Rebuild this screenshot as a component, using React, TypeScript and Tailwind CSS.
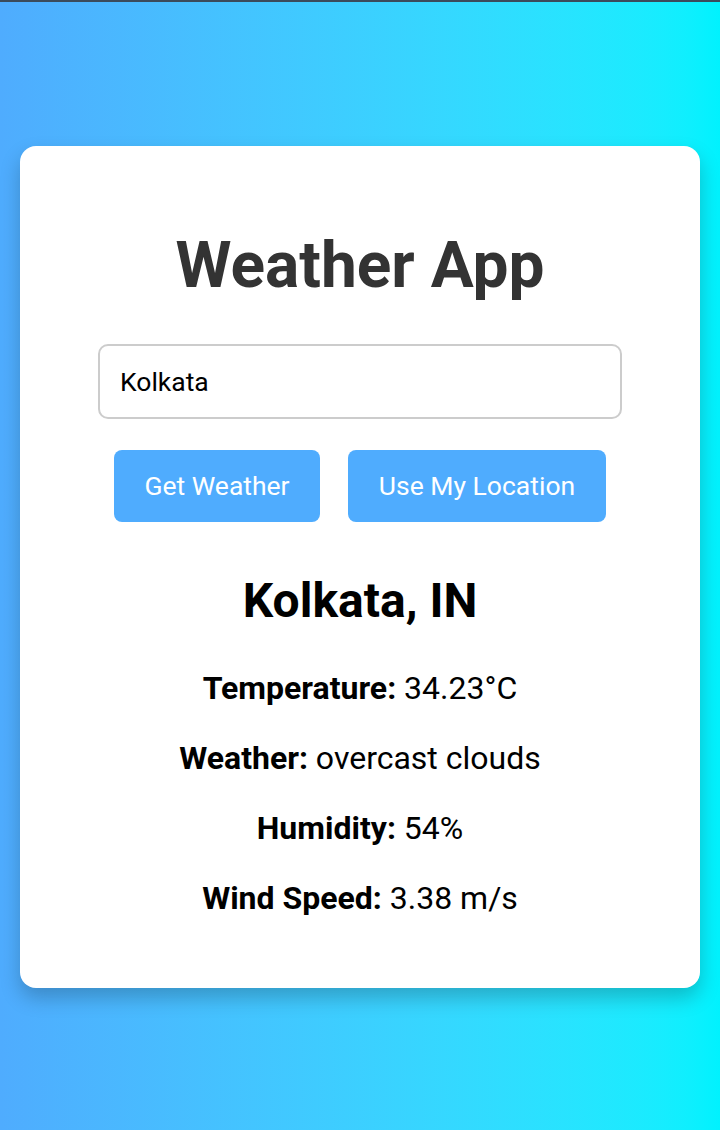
import React from "react";

export default function App() {
  const rows: [string, string][] = [
    ["Temperature:", "34.23°C"],
    ["Weather:", "overcast clouds"],
    ["Humidity:", "54%"],
    ["Wind Speed:", "3.38 m/s"],
  ];
  return (
    <div
      className="min-h-[1130px] w-full border-t-2 border-[#3b4b5c] bg-gradient-to-r from-[#4facfe] to-[#00f2fe] pt-[144px]"
      style={{ fontFamily: "Roboto, 'Noto Sans', sans-serif" }}
    >
      <div className="mx-[20px] flex h-[842px] flex-col items-center rounded-[16px] bg-white pt-[82px] shadow-[0_10px_20px_rgba(0,0,0,0.22)]">
        <h1 className="text-[64px] font-bold leading-[76px] text-[#333]">Weather App</h1>
        <input
          readOnly
          value="Kolkata"
          className="mt-[40px] h-[75px] w-[524px] rounded-[10px] border-2 border-[#ccc] px-[20px] text-[26.5px] text-black outline-none"
        />
        <div className="mt-[31px] flex gap-[28px]">
          <button className="h-[72px] w-[206px] rounded-[8px] bg-[#4facfe] text-[26.5px] text-white">
            Get Weather
          </button>
          <button className="h-[72px] w-[258px] rounded-[8px] bg-[#4facfe] text-[26.5px] text-white">
            Use My Location
          </button>
        </div>
        <h2 className="mt-[50px] text-[48px] font-bold leading-[58px] text-black">Kolkata, IN</h2>
        <div className="mt-[40px] flex flex-col items-center gap-[34px]">
          {rows.map(([k, v]) => (
            <p key={k} className="text-[32px] leading-[36px] text-black">
              <span className="font-bold">{k}</span> {v}
            </p>
          ))}
        </div>
      </div>
    </div>
  );
}
